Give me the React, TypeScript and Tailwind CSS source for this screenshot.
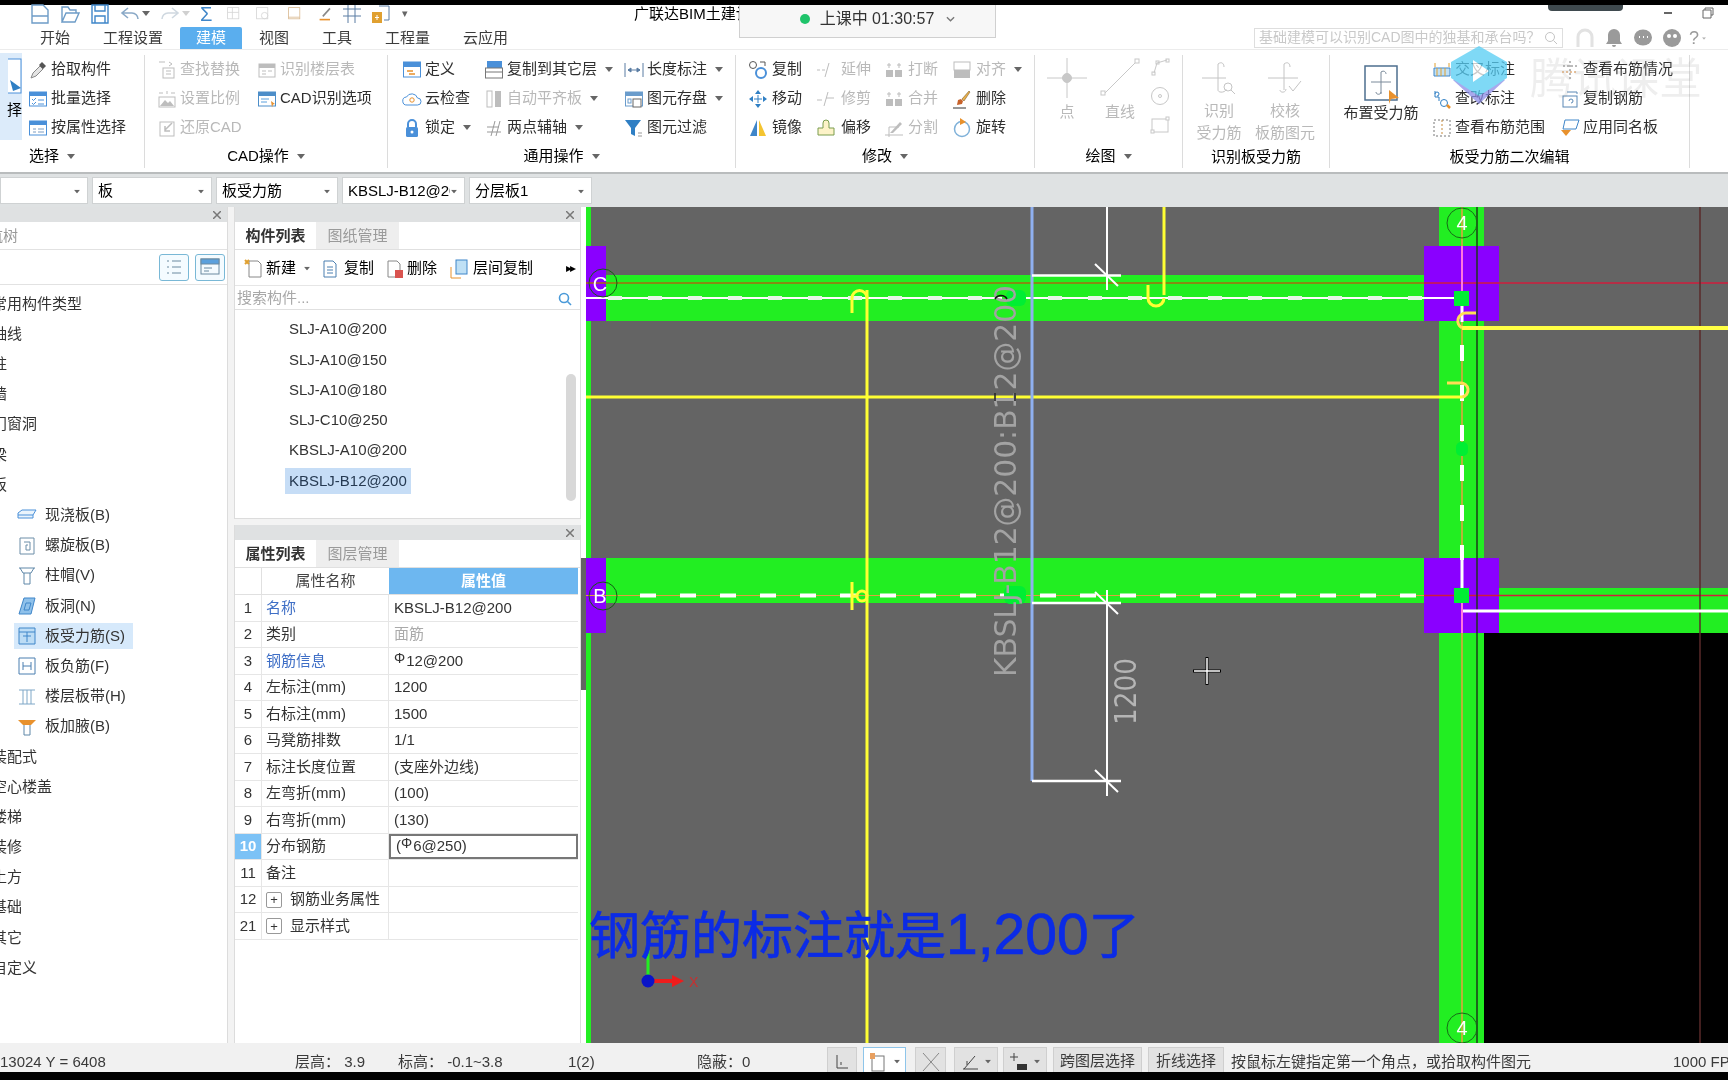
import type { ReactNode } from "react";

const BLUE = "#4a90d9";
const GR = "#bdbdbd";
const OR = "#e8912d";

function Ico({ children, className = "w-5 h-5" }: { children: ReactNode; className?: string }) {
  return (
    <svg viewBox="0 0 20 20" fill="none" className={`${className} shrink-0`}>
      {children}
    </svg>
  );
}

function Caret({ className = "" }: { className?: string }) {
  return (
    <svg viewBox="0 0 8 5" className={`w-2 h-[5px] shrink-0 ${className}`}>
      <path d="M0 0h8L4 5z" fill="#666" />
    </svg>
  );
}

function Win({ c = BLUE }: { c?: string }) {
  return (
    <>
      <rect x="1.5" y="3" width="17" height="14" stroke={c} fill="#fff" />
      <rect x="1.5" y="3" width="17" height="4" fill={c} />
    </>
  );
}

const icons: Record<string, ReactNode> = {
  pick: (
    <>
      <path d="M3 18l2-5 7-7 3 3-7 7z" fill="#e4e4e4" stroke="#888" />
      <path d="M11 5l3-3 4 4-3 3z" fill="#555" />
    </>
  ),
  batch: (
    <>
      <Win />
      <path d="M4 10l1.5 1.5L8 9M4 14l1.5 1.5L8 13M10 11h6M10 15h6" stroke={BLUE} />
    </>
  ),
  attr: (
    <>
      <Win />
      <path d="M5 11h3M5 14h3M10 11h6M10 14h6" stroke="#7a9cc2" />
    </>
  ),
  find: (
    <>
      <path d="M2 2h6M12 2l3 2-3 2" stroke={GR} />
      <rect x="6" y="8" width="11" height="10" stroke={GR} />
      <path d="M9 11h5M9 14h5" stroke={GR} />
    </>
  ),
  floor: (
    <>
      <rect x="2" y="4" width="16" height="13" stroke={GR} />
      <rect x="2" y="4" width="16" height="4" fill={GR} />
      <path d="M5 11h4M11 11h4M5 14h4" stroke={GR} />
    </>
  ),
  scale: (
    <>
      <path d="M2 4h4M14 4h4M10 2v3" stroke={GR} />
      <rect x="2" y="8" width="16" height="10" stroke={GR} />
      <path d="M3 17l5-6 3 3 2-2 4 5z" fill={GR} />
    </>
  ),
  cadopt: (
    <>
      <Win c="#4d8ec9" />
      <path d="M4 10h8M4 13h6" stroke="#5aa0dd" />
      <path d="M14 12l4 3-2 .5-1 3z" fill={OR} />
    </>
  ),
  restore: (
    <>
      <rect x="3" y="4" width="14" height="14" stroke={GR} />
      <path d="M15 5L8 12M8 8v5h5" stroke={GR} strokeWidth="1.5" />
    </>
  ),
  define: (
    <>
      <rect x="1.5" y="2" width="17" height="15" fill="#fff" stroke={BLUE} />
      <rect x="1.5" y="2" width="17" height="5" fill={BLUE} />
      <path d="M5 11h6M7 14h6" stroke={OR} strokeWidth="1.5" />
    </>
  ),
  copyfloor: (
    <>
      <rect x="3" y="1" width="15" height="7" fill={BLUE} />
      <rect x="1.5" y="8" width="17" height="10" fill="#fff" stroke="#777" />
      <path d="M2 12h16" stroke="#777" />
    </>
  ),
  length: <path d="M1 3v14M19 3v14M4 10h12M4 10l3-2v4zM16 10l-3-2v4z" stroke="#5a7da3" fill="#5a7da3" strokeWidth="1" />,
  cloud: (
    <>
      <path d="M5 16a4 4 0 0 1-.5-8 6 6 0 0 1 11 1 3.5 3.5 0 0 1 0 7z" stroke={BLUE} fill="#fff" />
      <circle cx="10" cy="11" r="2.2" stroke={OR} />
    </>
  ),
  align: (
    <>
      <rect x="3" y="2" width="5" height="16" stroke={GR} />
      <rect x="11" y="2" width="6" height="16" fill={GR} />
    </>
  ),
  save: (
    <>
      <Win c="#6a9ccc" />
      <rect x="9" y="10" width="8" height="8" fill="#fff" stroke="#666" />
      <rect x="4" y="10" width="3" height="4" stroke="#6a9ccc" />
    </>
  ),
  lock: (
    <>
      <path d="M6 9V6a4 4 0 0 1 8 0v3" stroke={BLUE} strokeWidth="2" />
      <rect x="4" y="9" width="12" height="10" rx="1.5" fill={BLUE} />
      <circle cx="10" cy="14" r="1.5" fill="#fff" />
    </>
  ),
  twopoint: <path d="M3 14h14M3 9h12M7 18L11 3M12 18L16 3" stroke="#999" />,
  filter: (
    <>
      <path d="M1 2h16l-6 8v8l-4-2v-6z" fill="#2f7fc4" />
      <path d="M14 15h4M14 18h4" stroke="#999" />
    </>
  ),
  copy: (
    <>
      <circle cx="5" cy="5" r="3.5" stroke="#555" />
      <circle cx="13" cy="13" r="5" stroke={BLUE} strokeWidth="2" />
      <path d="M12 2h5v4" stroke="#555" />
    </>
  ),
  extend: <path d="M1 10h3M6 10h3M13 3L9 17" stroke={GR} />,
  breakI: (
    <>
      <rect x="2" y="10" width="7" height="7" fill={GR} />
      <rect x="11" y="10" width="7" height="7" fill={GR} />
      <path d="M5 3v5M3 5h4M15 3v5M13 5h4" stroke={GR} />
    </>
  ),
  alignR: (
    <>
      <rect x="2" y="2" width="16" height="8" stroke={GR} />
      <rect x="2" y="10" width="16" height="8" fill={GR} />
    </>
  ),
  move: (
    <>
      <path d="M10 1l3 4H7zM10 19l3-4H7zM1 10l4-3v6zM19 10l-4-3v6z" fill="#2f7fc4" />
      <path d="M6 10h8M10 6v8" stroke="#2f7fc4" />
    </>
  ),
  trim: <path d="M1 11h5M10 9h8M12 3L8 17" stroke={GR} />,
  del: (
    <>
      <path d="M5 16l1-5 3-1 2 2-1 3z" fill="#c8622a" />
      <path d="M10 10l7-8 1 1-6 9z" fill="#e8b04c" stroke="#6b4a1c" strokeWidth=".5" />
      <path d="M1 19h13" stroke="#333" />
    </>
  ),
  mirror: (
    <>
      <path d="M9 2v16H2z" fill="#3f86c9" />
      <path d="M11 2v16h7z" fill="#f4c430" />
    </>
  ),
  offset: <path d="M7 5a3 3 0 0 1 6 0v5h5v7H2v-7h5z" fill="#fdf3c8" stroke="#7a9d4e" />,
  split: (
    <>
      <path d="M1 17h18M5 19V9h10" stroke={GR} />
      <path d="M6 15L16 4l2 2-9 9z" fill={GR} />
    </>
  ),
  rotate: (
    <>
      <circle cx="10" cy="11" r="7.5" stroke="#7fb1d9" strokeWidth="1.5" />
      <path d="M8 0l6 4-6 3z" fill={OR} />
    </>
  ),
  mark: (
    <>
      <path d="M2 8h16v8H2z" fill="#bfe0f5" stroke="#3f86c9" />
      <path d="M5 8v8M9 8v8M13 8v8M3 7V3M17 7V3" stroke="#e0a030" />
    </>
  ),
  edit: (
    <>
      <path d="M3 2v6h4v4M3 5a2 2 0 1 1 2 2" stroke="#2f7fc4" />
      <circle cx="12" cy="14" r="3.5" stroke="#2f7fc4" />
      <path d="M15 16l3 3" stroke={OR} strokeWidth="2.5" />
    </>
  ),
  range: (
    <>
      <rect x="2" y="2" width="16" height="16" stroke="#777" strokeDasharray="2 2" />
      <path d="M10 2v16" stroke="#c68a3a" strokeDasharray="2 2" />
    </>
  ),
  check: (
    <>
      <path d="M10 1v18M3 6h14" stroke="#777" strokeDasharray="2 2" />
      <path d="M2 12h16" stroke="#d98a3a" strokeDasharray="2 2" />
    </>
  ),
  copybar: (
    <>
      <rect x="3" y="7" width="14" height="11" stroke="#5a88b5" />
      <path d="M7 3h10v2M9 12a2 2 0 1 1 2 2" stroke="#5a88b5" />
    </>
  ),
  apply: (
    <>
      <path d="M5 2h14l-3 9H3z" fill="#fff" stroke="#3f86c9" />
      <path d="M1 12h10l-5 6z" fill={OR} />
    </>
  ),
};

function Item({ icon, label, off, caret, gap = "mr-[3px]" }: { icon: string; label: string; off?: boolean; caret?: boolean; gap?: string }) {
  return (
    <div className={`flex items-center h-[29px] whitespace-nowrap ${off ? "text-[#b9b9b9]" : "text-[#2f2f2f]"}`}>
      <span className={gap}>
        <Ico>{icons[icon]}</Ico>
      </span>
      {label}
      {caret && <Caret className="ml-2" />}
    </div>
  );
}

function Group({ title, w, children, footer = "justify-center", low }: { title: string; w: string; children: ReactNode; footer?: string; low?: boolean }) {
  return (
    <div className={`flex flex-col shrink-0 h-[113px] mt-[5px] border-r border-[#dcdcdc] ${w}`}>
      <div className="flex h-[89px] shrink-0">{children}</div>
      <div className={`flex items-center gap-2 h-[30px] ${footer} ${low ? "pt-[3px]" : ""}`}>
        {title}
        {!low && <Caret />}
      </div>
    </div>
  );
}

function Tall({ icon, lines, w, off = true, h = "h-[46px]" }: { icon: ReactNode; lines: string[]; w: string; off?: boolean; h?: string }) {
  return (
    <div className={`flex flex-col items-center shrink-0 ${w} ${off ? "text-[#b9b9b9]" : "text-[#2f2f2f]"}`}>
      <div className={`flex items-center justify-center ${h}`}>{icon}</div>
      {lines.map((l) => (
        <div key={l} className="leading-[22px] whitespace-nowrap">
          {l}
        </div>
      ))}
    </div>
  );
}

function QuickBar() {
  return (
    <div className="flex items-center w-[410px] shrink-0 h-[22px] -mt-[5px] pl-[30px] gap-[10px] overflow-hidden">
      <svg viewBox="0 0 20 20" className="w-5 h-5 shrink-0" fill="none" stroke="#6d9cc7" strokeWidth="1.4"><path d="M2 1h11l5 5v13H2zM2 12h16" /></svg>
      <svg viewBox="0 0 20 20" className="w-5 h-5 shrink-0" fill="none" stroke="#6d9cc7" strokeWidth="1.4"><path d="M2 18V3h6l2 3h6v3M2 18l4-9h13l-4 9z" /></svg>
      <svg viewBox="0 0 20 20" className="w-5 h-5 shrink-0" fill="none" stroke="#3f86c9" strokeWidth="1.4"><path d="M2 1h16v18H2zM5 1v6h10V1M5 19v-7h10v7" /></svg>
      <svg viewBox="0 0 20 20" className="w-5 h-5 shrink-0" fill="none" stroke="#8aa9c7" strokeWidth="1.6"><path d="M8 4L2 9l6 5M2 9h10a6 6 0 0 1 6 6" /></svg>
      <Caret className="-ml-2" />
      <svg viewBox="0 0 20 20" className="w-5 h-5 shrink-0" fill="none" stroke="#cfd8e0" strokeWidth="1.6"><path d="M12 4l6 5-6 5M18 9H8a6 6 0 0 0-6 6" /></svg>
      <Caret className="-ml-2 opacity-30" />
      <span className="text-[20px] leading-none text-[#3f86c9] w-3">Σ</span>
      <svg viewBox="0 0 20 20" className="w-4 h-4 shrink-0 ml-1" fill="none" stroke="#d4d4d4"><rect x="2" y="2" width="14" height="14" /><path d="M2 8h14M8 2v14" /></svg>
      <svg viewBox="0 0 20 20" className="w-4 h-4 shrink-0 ml-[3px]" fill="none" stroke="#d4d4d4"><rect x="2" y="2" width="14" height="14" /><circle cx="12" cy="12" r="4" /></svg>
      <svg viewBox="0 0 20 20" className="w-4 h-4 shrink-0 ml-[6px]" fill="none" stroke="#d9b98f"><rect x="2" y="2" width="14" height="14" /><path d="M2 14h14" /></svg>
      <svg viewBox="0 0 20 20" className="w-4 h-4 shrink-0 ml-[5px]" fill="none"><path d="M2 17h13" stroke={OR} strokeWidth="2" /><path d="M6 13L15 3" stroke="#888" strokeWidth="2" /></svg>
      <svg viewBox="0 0 20 20" className="w-5 h-5 shrink-0 -ml-[2px]" fill="none" stroke="#5a7da3"><path d="M1 5h18M1 12h18M6 1v18M13 1v18" /></svg>
      <svg viewBox="0 0 20 20" className="w-5 h-5 shrink-0 -ml-px" fill="none"><rect x="1" y="8" width="10" height="11" fill="#e0a030" /><path d="M6 11v5M4 13.500h4" stroke="#fff" /><path d="M8 2h10v14h-5" stroke="#5a7da3" /></svg>
      <span className="text-[11px] leading-none text-[#666] ml-px">▾</span>
    </div>
  );
}

function TitleBar() {
  return (
    <div className="flex items-center h-[22px] shrink-0">
      <QuickBar />
      <div className="flex items-center w-[224px] -mt-[3px] ml-[224px] overflow-hidden whitespace-nowrap shrink-0">广联达BIM土建计量平台</div>
      <div className="-ml-[3px] -mt-[3px] whitespace-nowrap">[1号办公楼.GTJ]</div>
      <div className="ml-auto flex items-center gap-[30px] pr-[14px] -mt-[6px]">
        <span className="w-[8px] h-[2px] bg-[#666]" />
        <svg viewBox="0 0 12 12" className="w-3 h-3" fill="none" stroke="#666"><path d="M3 3V1h8v7H9M1 3h8v8H1z" /></svg>
      </div>
    </div>
  );
}

function TabRow() {
  const tabs = ["开始", "工程设置", "建模", "视图", "工具", "工程量", "云应用"];
  return (
    <div className="flex h-[23px] shrink-0 border-b border-[#ececec]">
      <div className="flex gap-px pl-6">
        {tabs.map((t) => (
          <div key={t} className={`px-4 flex items-center rounded-t-[2px] whitespace-nowrap ${t === "建模" ? "bg-[#5aaeee] text-white" : "text-[#3c3c3c]"}`}>
            {t}
          </div>
        ))}
      </div>
      <div className="ml-auto flex items-center">
        <div className="flex items-center justify-between w-[309px] h-[20px] border border-[#dedede] px-1 text-[14px] text-[#c9c9c9] whitespace-nowrap overflow-hidden">
          基础建模可以识别CAD图中的独基和承台吗？
          <svg viewBox="0 0 14 14" className="w-[14px] h-[14px] shrink-0" fill="none" stroke="#c4c4c4"><circle cx="6" cy="6" r="4.500" /><path d="M9.500 9.500L13 13" /></svg>
        </div>
        <div className="flex items-center w-[165px] pl-3 gap-[9px]">
          <svg viewBox="0 0 20 20" className="w-5 h-5 shrink-0" fill="none" stroke="#e2e2e2" strokeWidth="3"><path d="M3 19V9a7 7 0 0 1 14 0v10" /></svg>
          <svg viewBox="0 0 20 20" className="w-5 h-5 shrink-0" fill="#9a9a9a"><path d="M10 1a6 6 0 0 1 6 6v6l2 3H2l2-3V7a6 6 0 0 1 6-6zM8 17h4a2 2 0 0 1-4 0z" /></svg>
          <svg viewBox="0 0 20 20" className="w-5 h-5 shrink-0"><ellipse cx="10" cy="9.500" rx="9" ry="8" fill="#9a9a9a" /><path d="M6 9h1M10 9h1M14 9h1" stroke="#fff" strokeWidth="2" /></svg>
          <svg viewBox="0 0 20 20" className="w-5 h-5 shrink-0"><circle cx="10" cy="10" r="9" fill="#9a9a9a" /><circle cx="7" cy="8" r="2" fill="#fff" /><circle cx="13" cy="8" r="2" fill="#fff" /></svg>
          <span className="text-[#9a9a9a] text-[18px] leading-none whitespace-nowrap -ml-[2px]">?</span>
          <Caret className="-ml-2 scale-50 opacity-50" />
          <svg viewBox="0 0 20 20" className="w-5 h-5 shrink-0 ml-[14px]" fill="#9a9a9a"><path d="M10 2l9 8h-3v8H4v-8H1z" /></svg>
        </div>
      </div>
    </div>
  );
}

function Ribbon() {
  return (
    <div className="flex h-[122px] shrink-0 overflow-hidden">
      <Group title="选择" w="w-[145px]" footer="justify-start pl-[29px]">
        <div className="w-[22px] h-[87px] -mt-[2px] bg-[#dcebfa] flex flex-col items-end overflow-hidden">
          <svg viewBox="0 0 14 40" className="w-[14px] h-[42px] mt-[4px] shrink-0" fill="none">
            <rect x="-8" y="1" width="21" height="34" fill="#fff" stroke={BLUE} />
            <path d="M2 22l11 8-8 3z" fill="#2f7fc4" />
          </svg>
          <div className="mt-[2px] w-[22px] overflow-hidden flex justify-end">择</div>
        </div>
        <div className="flex flex-col ml-[6px]">
          <Item icon="pick" label="拾取构件" />
          <Item icon="batch" label="批量选择" />
          <Item icon="attr" label="按属性选择" />
        </div>
      </Group>
      <Group title="CAD操作" w="w-[243px]">
        <div className="flex flex-col w-[100px] ml-[12px]">
          <Item icon="find" label="查找替换" off />
          <Item icon="scale" label="设置比例" off />
          <Item icon="restore" label="还原CAD" off />
        </div>
        <div className="flex flex-col">
          <Item icon="floor" label="识别楼层表" off />
          <Item icon="cadopt" label="CAD识别选项" />
        </div>
      </Group>
      <Group title="通用操作" w="w-[348px]">
        <div className="flex flex-col w-[82px] ml-[14px]">
          <Item icon="define" label="定义" />
          <Item icon="cloud" label="云检查" />
          <Item icon="lock" label="锁定" caret />
        </div>
        <div className="flex flex-col w-[140px]">
          <Item icon="copyfloor" label="复制到其它层" caret />
          <Item icon="align" label="自动平齐板" off caret />
          <Item icon="twopoint" label="两点辅轴" caret />
        </div>
        <div className="flex flex-col">
          <Item icon="length" label="长度标注" caret />
          <Item icon="save" label="图元存盘" caret />
          <Item icon="filter" label="图元过滤" />
        </div>
      </Group>
      <Group title="修改" w="w-[299px]">
        <div className="flex flex-col w-[68px] ml-[12px]">
          <Item icon="copy" label="复制" gap="mr-[4px]" />
          <Item icon="move" label="移动" gap="mr-[4px]" />
          <Item icon="mirror" label="镜像" gap="mr-[4px]" />
        </div>
        <div className="flex flex-col w-[68px]">
          <Item icon="extend" label="延伸" off gap="mr-[5px]" />
          <Item icon="trim" label="修剪" off gap="mr-[5px]" />
          <Item icon="offset" label="偏移" gap="mr-[5px]" />
        </div>
        <div className="flex flex-col w-[68px]">
          <Item icon="breakI" label="打断" off gap="mr-[4px]" />
          <Item icon="breakI" label="合并" off gap="mr-[4px]" />
          <Item icon="split" label="分割" off gap="mr-[4px]" />
        </div>
        <div className="flex flex-col">
          <Item icon="alignR" label="对齐" off caret gap="mr-[4px]" />
          <Item icon="del" label="删除" gap="mr-[4px]" />
          <Item icon="rotate" label="旋转" gap="mr-[4px]" />
        </div>
      </Group>
      <Group title="绘图" w="w-[148px]">
        <Tall
          w="w-[50px] ml-[7px]"
          lines={["点"]}
          icon={
            <svg viewBox="0 0 40 40" className="w-10 h-10" fill="none" stroke="#c8c8c8"><path d="M20 0v40M0 20h40" /><circle cx="20" cy="20" r="4.500" fill="#c8c8c8" /></svg>
          }
        />
        <Tall
          w="w-[56px]"
          lines={["直线"]}
          icon={
            <svg viewBox="0 0 40 40" className="w-10 h-10" fill="none" stroke="#c8c8c8"><path d="M4 36L36 4" /><rect x="1" y="33" width="4" height="4" fill="#fff" /><rect x="35" y="1" width="4" height="4" fill="#fff" /></svg>
          }
        />
        <div className="flex flex-col gap-[9px] mt-[2px] ml-[2px]">
          <svg viewBox="0 0 20 20" className="w-5 h-5" fill="none" stroke="#c8c8c8"><path d="M4 16L7 6l10-3" /><rect x="2" y="15" width="3" height="3" /><rect x="6" y="4" width="3" height="3" /><rect x="16" y="2" width="3" height="3" /></svg>
          <svg viewBox="0 0 20 20" className="w-5 h-5" fill="none" stroke="#c8c8c8"><circle cx="10" cy="10" r="8.500" /><circle cx="10" cy="10" r="1.500" /></svg>
          <svg viewBox="0 0 20 20" className="w-5 h-5" fill="none" stroke="#c8c8c8"><rect x="2" y="4" width="16" height="13" /><rect x="16" y="2" width="3" height="3" fill="#fff" /><rect x="1" y="15" width="3" height="3" fill="#fff" /></svg>
        </div>
      </Group>
      <Group title="识别板受力筋" w="w-[147px]" low>
        <Tall
          w="w-[66px] ml-[3px]"
          h="h-[51px]"
          lines={["识别", "受力筋"]}
          icon={
            <svg viewBox="0 0 36 36" className="w-9 h-9" fill="none" stroke="#c4c4c4"><path d="M1 18h24M17 4v26M17 4c4-3 6 0 6 3M17 30c0 3 8 3 8-1" /><circle cx="27" cy="27" r="4" /><path d="M30 30l4 4" /></svg>
          }
        />
        <Tall
          w="w-[66px]"
          h="h-[51px]"
          lines={["校核", "板筋图元"]}
          icon={
            <svg viewBox="0 0 36 36" className="w-9 h-9" fill="none" stroke="#c4c4c4"><path d="M1 18h30M17 4v26M17 4c4-3 6 0 6 3M13 30c0 3 6 3 6-1" /><path d="M22 26l4 5 8-10" /></svg>
          }
        />
      </Group>
      <Group title="板受力筋二次编辑" w="w-[360px]" low>
        <Tall
          off={false}
          w="w-[92px] ml-[5px]"
          h="h-[47px]"
          lines={["布置受力筋"]}
          icon={
            <svg viewBox="0 0 40 40" className="w-10 h-10 mt-[10px]" fill="none"><rect x="4" y="2" width="32" height="34" stroke="#4e6f8f" strokeWidth="1.500" /><path d="M10 18h20M20 8v22M20 8c3-2 5 0 5 2M15 28c0 3 5 3 5 0" stroke="#7a8a9a" /><path d="M28 26l10 8-8 1-2 5z" fill={OR} /></svg>
          }
        />
        <div className="flex flex-col w-[128px] ml-[5px]">
          <Item icon="mark" label="交叉标注" />
          <Item icon="edit" label="查改标注" />
          <Item icon="range" label="查看布筋范围" />
        </div>
        <div className="flex flex-col">
          <Item icon="check" label="查看布筋情况" />
          <Item icon="copybar" label="复制钢筋" />
          <Item icon="apply" label="应用同名板" />
        </div>
      </Group>
    </div>
  );
}

function Combo({ w, text }: { w: string; text: string }) {
  return (
    <div className={`flex items-center justify-between h-[27px] bg-white border border-[#cfd2d3] pt-px pl-[5px] pr-[6px] ${w}`}>
      <span className="overflow-hidden whitespace-nowrap">{text}</span>
      <Caret className="scale-75" />
    </div>
  );
}

function ComboRow() {
  return (
    <div className="flex items-center gap-1 h-[35px] shrink-0 bg-[#dfe2e3] border-t-2 border-[#b9bcbd]">
      <Combo w="w-[88px]" text="" />
      <Combo w="w-[120px]" text="板" />
      <Combo w="w-[122px]" text="板受力筋" />
      <Combo w="w-[123px]" text="KBSLJ-B12@200" />
      <Combo w="w-[123px]" text="分层板1" />
    </div>
  );
}

function Close() {
  return (
    <div className="flex items-center justify-end h-[15px] shrink-0 bg-[#dfe1e2] pr-[6px]">
      <svg viewBox="0 0 8 8" className="w-2 h-2" stroke="#777" strokeWidth="1.500"><path d="M0 0l8 8M8 0L0 8" /></svg>
    </div>
  );
}

const topTree = ["常用构件类型", "轴线", "柱", "墙", "门窗洞", "梁", "板"];
const bottomTree = ["装配式", "空心楼盖", "楼梯", "装修", "土方", "基础", "其它", "自定义"];
const slabTree: [string, ReactNode][] = [
  ["现浇板(B)", <path key="a" d="M1 8l4-3h14l-3 5v3H1zM1 10h15" stroke="#4a90d9" fill="#eaf4fc" />],
  ["螺旋板(B)", <path key="a" d="M3 2h14v16H3zM7 6h6v8H9v-5h2" stroke="#6d8ea8" />],
  ["柱帽(V)", <path key="a" d="M2 2h16M3 2l3 5h8l3-5M7 7v11h6V7" stroke="#5f87a8" />],
  ["板洞(N)", <path key="a" d="M2 18L7 2h11l-4 16zM7 14l2-7h5l-2 7z" stroke="#3f86c9" fill="#8fc1ea" />],
  ["板受力筋(S)", <path key="a" d="M2 2h16v16H2zM2 6h16M6 10h8M10 6v10" stroke="#3f86c9" fill="#bcdcf5" />],
  ["板负筋(F)", <path key="a" d="M2 2h16v16H2zM6 6v8M14 6v8M6 10h8" stroke="#4a7fb0" />],
  ["楼层板带(H)", <path key="a" d="M2 3h16M2 17h16M6 3v14M10 3v14M14 3v14" stroke="#7fa7c7" />],
  ["板加腋(B)", <><path key="a" d="M1 3h18l-5 5H6z" fill={OR} /><path key="b" d="M7 8v10h6V8" stroke="#5f87a8" /></>],
];

function TreePanel() {
  return (
    <div className="flex flex-col w-[228px] shrink-0 bg-white border-r border-[#dcdcdc] overflow-hidden">
      <Close />
      <div className="flex items-center h-[28px] pt-px -ml-[27px] text-[#999] border-b border-[#e2e2e2] shrink-0">导航树</div>
      <div className="flex items-center justify-end gap-[6px] h-[35px] pr-[2px] border-b border-[#e2e2e2] shrink-0">
        <div className="flex items-center justify-center w-[30px] h-[27px] border border-[#79b8d6] rounded-[3px] bg-[#f4fbff]">
          <svg viewBox="0 0 20 20" className="w-5 h-5" fill="none" stroke="#6b8aa0"><path d="M3 4h2M3 10h2M3 16h2M8 4h9M8 10h9M8 16h9" /></svg>
        </div>
        <div className="flex items-center justify-center w-[30px] h-[27px] border border-[#79b8d6] rounded-[3px] bg-[#f4fbff]">
          <svg viewBox="0 0 20 20" className="w-5 h-5" fill="none" stroke="#6b8aa0"><rect x="1" y="2" width="18" height="15" /><rect x="1" y="2" width="18" height="5" fill="#5aa0dd" /><path d="M4 11h8M4 14h5" /></svg>
        </div>
      </div>
      <div className="flex flex-col -ml-2 pt-[4px] text-[#333]">
        {topTree.map((t) => (
          <div key={t} className="flex items-center h-[30.2px] whitespace-nowrap">
            {t}
          </div>
        ))}
        {slabTree.map(([t, p]) => (
          <div key={t} className="flex items-center h-[30.2px] pl-[22px]">
            <div className={`flex items-center h-[26px] pl-[3px] pr-[8px] ${t === "板受力筋(S)" ? "bg-[#d6e9fb]" : ""}`}>
              <span className="mr-[8px]">
                <Ico>{p}</Ico>
              </span>
              {t}
            </div>
          </div>
        ))}
        {bottomTree.map((t) => (
          <div key={t} className="flex items-center h-[30.2px] whitespace-nowrap">
            {t}
          </div>
        ))}
      </div>
    </div>
  );
}

function Tabs({ a, b }: { a: string; b: string }) {
  return (
    <div className="flex h-[28px] shrink-0 border-b border-[#e0e0e0]">
      <div className="flex items-center justify-center w-[81px] pt-[2px] font-bold text-[#333]">{a}</div>
      <div className="flex items-center justify-center w-[83px] pt-[2px] bg-[#eeeeee] text-[#9a9a9a]">{b}</div>
    </div>
  );
}

function ListPanel() {
  const items = ["SLJ-A10@200", "SLJ-A10@150", "SLJ-A10@180", "SLJ-C10@250", "KBSLJ-A10@200", "KBSLJ-B12@200"];
  return (
    <div className="flex flex-col h-[312px] shrink-0 bg-white border border-t-0 border-[#dcdcdc]">
      <Close />
      <Tabs a="构件列表" b="图纸管理" />
      <div className="flex items-center h-[36px] pl-[9px] pt-[2px] border-b border-[#e6e6e6] shrink-0">
        <Ico>
          <path d="M5 2h9l3 3v13H5z" stroke="#888" fill="#fff" />
          <path d="M1 1l4 4M5 1L1 5" stroke="#e0a030" strokeWidth="2" />
        </Ico>
        <span className="ml-[2px]">新建</span>
        <Caret className="ml-[7px] scale-75" />
        <span className="ml-[9px]">
          <Ico>
            <path d="M4 2h9l3 3v13H4zM7 8h6M7 11h6M7 14h6" stroke="#4a7fb0" />
          </Ico>
        </span>
        <span className="ml-[4px]">复制</span>
        <span className="ml-[11px]">
          <Ico>
            <path d="M3 2h9l3 3v13H3z" stroke="#888" />
            <rect x="10" y="11" width="8" height="8" fill="#d9534f" />
          </Ico>
        </span>
        <span className="ml-[2px]">删除</span>
        <span className="ml-[12px]">
          <Ico>
            <path d="M2 8v11h10" stroke={OR} />
            <rect x="7" y="1" width="11" height="14" fill="#bfe0f5" stroke="#3f86c9" />
          </Ico>
        </span>
        <span className="ml-[4px]">层间复制</span>
        <span className="ml-auto mr-[6px] text-[12px] tracking-[-2px]">▸▸</span>
      </div>
      <div className="flex items-center justify-between h-[24px] pl-[2px] pr-[8px] pt-[2px] text-[#a8a8a8] border-b border-[#e0e0e0] shrink-0">
        搜索构件...
        <svg viewBox="0 0 14 14" className="w-[14px] h-[14px]" fill="none" stroke="#4a9ad9" strokeWidth="1.600"><circle cx="6" cy="6" r="4.500" /><path d="M9.500 9.500L13 13" /></svg>
      </div>
      <div className="flex flex-1 pt-[4px]">
        <div className="flex flex-col flex-1 pl-[50px]">
          {items.map((t, i) => (
            <div key={t} className="flex items-center h-[30.3px]">
              <span className={`flex items-center h-[26px] px-1 pt-px ${i === 5 ? "bg-[#c6ddf6] text-[#263a52]" : "text-[#333]"}`}>{t}</span>
            </div>
          ))}
        </div>
        <div className="w-[10px] h-[127px] mt-[60px] mr-[4px] rounded-full bg-[#d8d8d8]" />
      </div>
    </div>
  );
}

const phi = <span className="text-[14px] relative -top-[3px] mr-px">Φ</span>;
const rows: { n: number; name: string; val?: ReactNode; link?: boolean; grey?: boolean; plus?: boolean; sel?: boolean }[] = [
  { n: 1, name: "名称", val: "KBSLJ-B12@200", link: true },
  { n: 2, name: "类别", val: "面筋", grey: true },
  { n: 3, name: "钢筋信息", val: <>{phi}12@200</>, link: true },
  { n: 4, name: "左标注(mm)", val: "1200" },
  { n: 5, name: "右标注(mm)", val: "1500" },
  { n: 6, name: "马凳筋排数", val: "1/1" },
  { n: 7, name: "标注长度位置", val: "(支座外边线)" },
  { n: 8, name: "左弯折(mm)", val: "(100)" },
  { n: 9, name: "右弯折(mm)", val: "(130)" },
  { n: 10, name: "分布钢筋", val: <>({phi}6@250)</>, sel: true },
  { n: 11, name: "备注" },
  { n: 12, name: "钢筋业务属性", plus: true },
  { n: 21, name: "显示样式", plus: true },
];

function PropPanel() {
  return (
    <div className="flex flex-col flex-1 mt-[6px] bg-white border-x border-[#dcdcdc]">
      <Close />
      <Tabs a="属性列表" b="图层管理" />
      <div className="flex h-[27px] shrink-0 w-[343px] border-b border-[#e0e0e0]">
        <div className="w-[27px] border-r border-[#e0e0e0]" />
        <div className="flex items-center justify-center w-[127px] pt-px text-[#444]">属性名称</div>
        <div className="flex items-center justify-center flex-1 pt-px bg-[#6db7f0] text-white font-bold">属性值</div>
      </div>
      {rows.map((r) => (
        <div key={r.n} className="flex h-[26.5px] shrink-0 w-[343px] border-b border-[#e6e6e6] text-[#333]">
          <div className={`flex items-center justify-center w-[27px] pt-px border-r border-[#e6e6e6] ${r.sel ? "bg-[#7cc2f6] text-white font-bold" : ""}`}>{r.n}</div>
          <div className={`flex items-center w-[127px] pl-[4px] pt-px border-r border-[#e6e6e6] whitespace-nowrap ${r.link ? "text-[#3f6fc6]" : ""}`}>
            {r.plus && (
              <span className="flex items-center justify-center w-[16px] h-[16px] mr-[8px] border border-[#999] rounded-[2px] text-[13px] leading-none">+</span>
            )}
            {r.name}
          </div>
          <div className={`flex items-center flex-1 pl-[5px] pt-px ${r.grey ? "text-[#aaa]" : ""} ${r.sel ? "border-2 border-[#777]" : ""}`}>{r.val}</div>
        </div>
      ))}
    </div>
  );
}

function Hook({ d, c = "#ffff33", w = 3 }: { d: string; c?: string; w?: number }) {
  return <path d={d} stroke={c} strokeWidth={w} fill="none" />;
}

function Tick({ x, y }: { x: number; y: number }) {
  return <path d={`M${x - 12} ${y - 11}L${x + 11} ${y + 11}`} stroke="#fff" strokeWidth="2" />;
}

function Canvas() {
  const green = "#22ee22";
  const purple = "#8a00ff";
  return (
    <div className="relative flex-1 bg-[#646464]">
      <svg viewBox="586 207 1142 836" className="w-full h-full block" fill="none">
        <rect x="586" y="207" width="5" height="836" fill={green} />
        <rect x="606" y="275" width="820" height="46" fill={green} />
        <rect x="606" y="558" width="820" height="45" fill={green} />
        <rect x="1439" y="207" width="45" height="836" fill={green} />
        <rect x="1499" y="588" width="229" height="45" fill={green} />
        <rect x="1484" y="633" width="244" height="410" fill="#000" />
        <rect x="586" y="246" width="20" height="75" fill={purple} />
        <rect x="586" y="558" width="20" height="75" fill={purple} />
        <rect x="1424" y="246" width="75" height="75" fill={purple} />
        <rect x="1424" y="558" width="75" height="75" fill={purple} />

        {/* axis lines */}
        <path d="M586 283H1424" stroke="#a86a10" strokeWidth="1.500" />
        <path d="M1424 283H1728" stroke="#d01c3c" strokeWidth="1.500" />
        <path d="M586 595.500H1424" stroke="#e0a040" strokeWidth="1" />
        <path d="M1424 595.500H1728" stroke="#d01c3c" strokeWidth="1.500" />
        <path d="M1462 207V1043" stroke="#e8a040" strokeWidth="1.500" />
        <path d="M1462 246V321M1462 558V633" stroke="#ff77dd" strokeWidth="2" />
        <path d="M1477 207V1043" stroke="#1c3a1c" strokeWidth="1.500" />
        <path d="M1700 207V1043" stroke="#5a2a2a" strokeWidth="1.500" />

        {/* white rebars */}
        <path d="M586 298H1002M1024 298H1455" stroke="#fff" strokeWidth="2" />
        <path d="M608 298H1424" stroke="#e8f5e8" strokeWidth="4" strokeDasharray="14 26" />
        <path d="M640 595.500H1424" stroke="#fff" strokeWidth="4" strokeDasharray="16 24" />
        <path d="M1462 345V560" stroke="#fff" strokeWidth="4" strokeDasharray="16 24" />
        <path d="M1463 611H1728" stroke="#fff" strokeWidth="3" />
        <path d="M1462 305V322M1462 560V590" stroke="#fff" strokeWidth="3" />

        {/* yellow rebars */}
        <path d="M586 397H1462" stroke="#ffff33" strokeWidth="3" />
        <path d="M1462 328H1728" stroke="#ffff44" strokeWidth="4" />
        <path d="M867 290V1043" stroke="#ffff33" strokeWidth="3" />
        <path d="M1164 207V295" stroke="#ffff33" strokeWidth="3" />
        <Hook d="M852 313V298a7.500 7.500 0 0 1 15 0" />
        <Hook d="M1148 285V298a8 8 0 0 0 16 0" />
        <Hook d="M852 582V610M852 596h5M857 596a5 5 0 0 1 10 0a5 5 0 0 1-10 0" />
        <Hook d="M1476 313H1466a8 8 0 0 0-4 15" c="#ffdd55" />
        <Hook d="M1447 383H1460a7 7 0 0 1 2 14" c="#ffdd55" />

        {/* dimension */}
        <path d="M1032 207V781" stroke="#8fb0f0" strokeWidth="3" />
        <path d="M1107 207V290M1107 590V796" stroke="#fff" strokeWidth="2" />
        <path d="M1032 275.500H1121M1032 603H1121M1032 781H1121" stroke="#fff" strokeWidth="2.500" />
        <Tick x={1107} y={275} />
        <Tick x={1107} y={603} />
        <Tick x={1107} y={781} />

        {/* joints */}
        <rect x="1454" y="291" width="15" height="15" fill="#00ee33" />
        <rect x="1454" y="588" width="15" height="15" fill="#00ee33" />
        <rect x="1456" y="442" width="12" height="14" rx="5" fill="#00ee33" />
        <rect x="1006" y="290" width="20" height="16" rx="6" fill="#00ee33" />
        <rect x="1004" y="586" width="22" height="18" rx="6" fill="#00ee33" />

        {/* labels */}
        <text transform="translate(1016 677) rotate(-90)" fontFamily="'DejaVu Sans',sans-serif" fontSize="31" fill="#a3a3a3" textLength="392" lengthAdjust="spacingAndGlyphs">
          KBSLJ-B12@200:B12@200
        </text>
        <path d="M995 299a7 7 0 0 1 12 0" stroke="#111" strokeWidth="1.500" />
        <path d="M995 393v8M1015 393v8" stroke="#222" strokeWidth="1.500" />
        <text transform="translate(1136 725) rotate(-90)" fontFamily="'DejaVu Sans',sans-serif" fontSize="31" fill="#b5b5b5" textLength="67" lengthAdjust="spacingAndGlyphs">
          1200
        </text>
        <circle cx="603" cy="283" r="14" stroke="#145c14" />
        <circle cx="603" cy="596" r="14" stroke="#145c14" />
        <circle cx="1462" cy="223" r="15" stroke="#176a17" />
        <circle cx="1462" cy="1028" r="15" stroke="#176a17" />
        <text x="600" y="291" textAnchor="middle" fontFamily="'Liberation Sans',sans-serif" fontSize="20" fill="#fff">C</text>
        <text x="600" y="603" textAnchor="middle" fontFamily="'Liberation Sans',sans-serif" fontSize="20" fill="#fff">B</text>
        <text x="1462" y="230" textAnchor="middle" fontFamily="'Liberation Sans',sans-serif" fontSize="20" fill="#fff">4</text>
        <text x="1462" y="1035" textAnchor="middle" fontFamily="'Liberation Sans',sans-serif" fontSize="20" fill="#fff">4</text>

        {/* coordinate marker */}
        <path d="M648 975V950" stroke="#22ee22" strokeWidth="3" />
        <path d="M648 981H672" stroke="#ee1c1c" strokeWidth="4" />
        <path d="M672 975L684 981L672 987z" fill="#ee1c1c" />
        <circle cx="648" cy="981" r="6.500" fill="#0a14c8" />
        <text x="689" y="987" fontFamily="'Liberation Sans',sans-serif" fontSize="14" fill="#c83030">X</text>

        {/* cursor */}
        <path d="M1207 657V685M1193 671H1221" stroke="#000" strokeWidth="3" />
        <path d="M1207 658V684M1194 671H1220" stroke="#fff" strokeWidth="1.500" />
      </svg>
      <div className="absolute left-[3px] top-[695px] flex items-baseline text-[51px] leading-[64px] text-[#0b2be6] whitespace-nowrap [-webkit-text-stroke:0.7px_#0b2be6]">
        钢筋的标注就是<span className="text-[57px]">1,200</span>了
      </div>
    </div>
  );
}

function Btn({ w, ml, children, active }: { w: string; ml: string; children: ReactNode; active?: boolean }) {
  return (
    <div className={`flex items-center justify-center self-end h-[25px] pt-[3px] shrink-0 border border-b-0 ${w} ${ml} ${active ? "bg-white border-[#8ec5ea]" : "bg-[#e2e2e2] border-[#cfcfcf]"}`}>
      {children}
    </div>
  );
}

function StatusBar() {
  return (
    <div className="flex items-center h-[29px] pt-[10px] shrink-0 bg-[#f1f1f1] text-[#3a3a3a] whitespace-nowrap">
      <span className="w-[295px] shrink-0">13024 Y = 6408</span>
      <span className="w-[103px] shrink-0">层高： 3.9</span>
      <span className="w-[170px] shrink-0">标高： -0.1~3.8</span>
      <span className="w-[129px] shrink-0">1(2)</span>
      <span className="w-[130px] shrink-0">隐蔽：0</span>
      <Btn w="w-[30px]" ml="">
        <svg viewBox="0 0 16 16" className="w-4 h-4" fill="none" stroke="#444"><path d="M3 1v13h11M7 8v3" /></svg>
      </Btn>
      <Btn w="w-[43px]" ml="ml-[6px]" active>
        <svg viewBox="0 0 20 20" className="w-5 h-5" fill="none"><rect x="3" y="4" width="12" height="15" stroke="#777" /><rect x="1" y="1" width="5" height="6" fill="#e8a060" /></svg>
        <Caret className="ml-1 scale-75" />
      </Btn>
      <Btn w="w-[31px]" ml="ml-[9px]">
        <svg viewBox="0 0 20 20" className="w-5 h-5" fill="none" stroke="#888"><path d="M2 1l16 18M18 1L2 19" /></svg>
      </Btn>
      <Btn w="w-[44px]" ml="ml-[8px]">
        <svg viewBox="0 0 20 20" className="w-5 h-5" fill="none" stroke="#444"><path d="M3 17h15M4 17L15 4M7 9v4" /></svg>
        <Caret className="ml-1 scale-75" />
      </Btn>
      <Btn w="w-[44px]" ml="ml-[5px]">
        <svg viewBox="0 0 20 20" className="w-5 h-5" fill="none"><path d="M5 1v8M1 5h8" stroke="#444" /><rect x="8" y="12" width="10" height="6" fill="#333" /></svg>
        <Caret className="ml-1 scale-75" />
      </Btn>
      <Btn w="w-[89px]" ml="ml-[6px]">跨图层选择</Btn>
      <Btn w="w-[76px]" ml="ml-[6px]">折线选择</Btn>
      <span className="ml-[7px]">按鼠标左键指定第一个角点，或拾取构件图元</span>
      <span className="ml-auto w-[55px] overflow-hidden shrink-0">1000 FPS</span>
    </div>
  );
}

export default function App() {
  return (
    <div className="relative flex flex-col w-[1728px] h-[1080px] overflow-hidden bg-white text-[15px] leading-tight blur-[0.5px] font-['Liberation_Sans','Noto_Sans_CJK_SC',sans-serif]">
      <div className="h-[5px] bg-black shrink-0" />
      <TitleBar />
      <TabRow />
      <Ribbon />
      <ComboRow />
      <div className="flex flex-1 min-h-0 bg-[#f3f3f3]">
        <TreePanel />
        <div className="flex flex-col w-[347px] ml-[6px] shrink-0">
          <ListPanel />
          <PropPanel />
        </div>
        <div className="flex flex-col w-[5px] shrink-0">
          <div className="h-[351px] bg-white" />
          <div className="h-[132px] bg-[#636363]" />
          <div className="flex-1 bg-white" />
        </div>
        <Canvas />
      </div>
      <StatusBar />
      <div className="h-[8px] bg-black shrink-0" />

      {/* class timer over the title bar */}
      <div className="absolute left-[739px] top-[5px] flex items-center justify-center gap-2 w-[257px] h-[33px] pl-[20px] pb-[5px] bg-[#f7f7f7] border border-t-0 border-[#d0d0d0] text-[16px]">
        <span className="w-[10px] h-[10px] rounded-full bg-[#1fc46b]" />
        <span className="ml-[2px] text-[#333]">上课中 01:30:57</span>
        <svg viewBox="0 0 10 6" className="w-[9px] h-[6px] ml-1" fill="none" stroke="#777" strokeWidth="1.500"><path d="M1 1l4 4 4-4" /></svg>
      </div>
      <div className="absolute left-[1548px] top-[5px] w-[75px] h-[6px] rounded-b-[4px] bg-[#3f4a4f]" />

      {/* video watermark */}
      <svg viewBox="0 0 64 62" className="absolute left-[1447px] top-[46px] w-16 h-[62px] opacity-75">
        <path d="M6 34l26 24 26-24-26-14z" fill="#8c8de6" />
        <path d="M32 0l28 16v16L32 50 4 32V16z" fill="#55cdf4" />
        <path d="M26 14l16 11-16 11z" fill="#fff" />
      </svg>
      <div className="absolute left-[1530px] top-[58px] text-[43px] leading-none text-[#8a8a8a]/15 whitespace-nowrap">腾讯课堂</div>
    </div>
  );
}
